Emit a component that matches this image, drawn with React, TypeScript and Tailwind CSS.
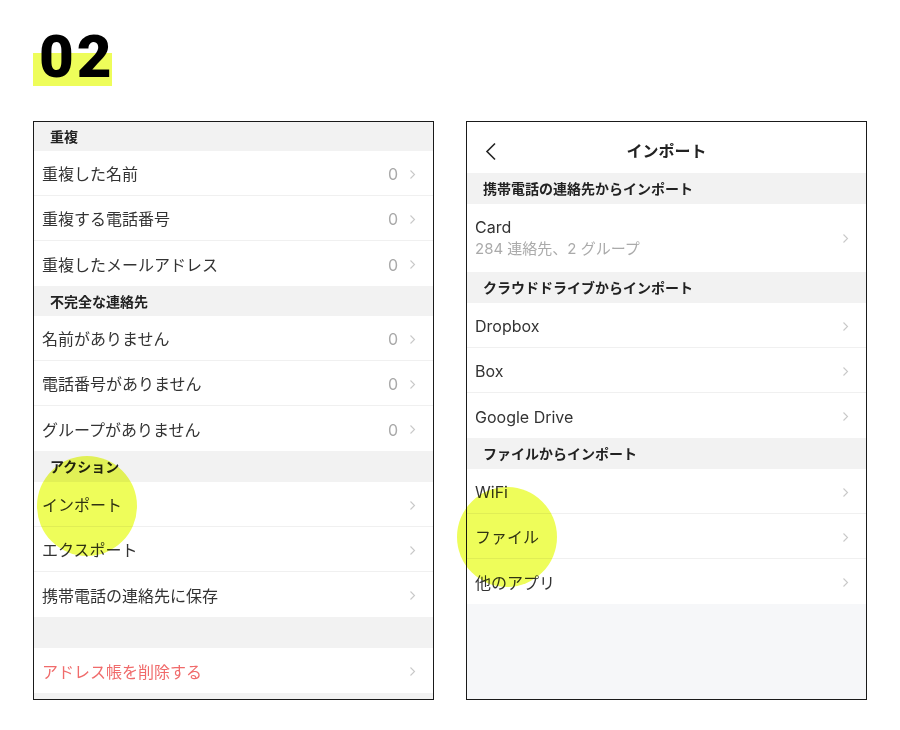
import React from "react";

const Chevron = () => (
  <svg width="7" height="11" viewBox="0 0 7 11" className="shrink-0">
    <polyline points="1.5,1.5 5.5,5.5 1.5,9.5" fill="none" stroke="#c9c9c9" strokeWidth="1.1" />
  </svg>
);

const Header = ({ children, h = "h-[30px]" }: { children: React.ReactNode; h?: string }) => (
  <div className={`${h} bg-[#f2f2f2] flex items-center pl-[16px] text-[14px] font-bold text-[#222]`}>
    {children}
  </div>
);

const Row = ({
  label,
  value,
  red,
  last,
}: {
  label: string;
  value?: string;
  red?: boolean;
  last?: boolean;
}) => (
  <div
    className={`h-[45px] bg-white flex items-center pl-[8px] pr-[17px] pt-[2px] ${last ? "" : "border-b border-[#f0f0f0]"}`}
  >
    <span className={`flex-1 text-[16px] ${red ? "text-[#f06b6b]" : "text-[#333]"}`}>{label}</span>
    {value !== undefined && <span className="text-[16px] text-[#aaa] mr-[11px]">{value}</span>}
    <Chevron />
  </div>
);

export default function App() {
  return (
    <div
      className="relative w-[900px] h-[730px] bg-white overflow-hidden"
      style={{ fontFamily: 'Inter, "Noto Sans CJK JP", sans-serif' }}
    >
      <div className="ml-[33px] mt-[28px] h-[58px] w-[79px] bg-[linear-gradient(transparent_25px,#eefd5a_25px)]">
        <span
          className="block pl-[6px] text-[60px] leading-[58px] font-black tracking-[3px] text-black"
          style={{ fontFamily: "Roboto, sans-serif" }}
        >
          02
        </span>
      </div>

      <div className="mt-[35px] flex gap-[32px] px-[33px]">
        {/* Left panel */}
        <div className="w-[401px] h-[579px] border border-[#1a1a1a] bg-[#f2f2f2] flex flex-col">
          <Header h="h-[29px]">重複</Header>
          <Row label="重複した名前" value="0" />
          <Row label="重複する電話番号" value="0" />
          <Row label="重複したメールアドレス" value="0" last />
          <Header>不完全な連絡先</Header>
          <Row label="名前がありません" value="0" />
          <Row label="電話番号がありません" value="0" />
          <Row label="グループがありません" value="0" last />
          <Header h="h-[31px]">アクション</Header>
          <Row label="インポート" />
          <Row label="エクスポート" />
          <Row label="携帯電話の連絡先に保存" last />
          <div className="h-[31px] bg-[#f2f2f2]" />
          <Row label="アドレス帳を削除する" red last />
        </div>

        {/* Right panel */}
        <div className="w-[401px] h-[579px] border border-[#1a1a1a] bg-[#f6f7f9] flex flex-col">
          <div className="h-[51px] bg-white relative flex items-center justify-center pt-[7px]">
            <svg width="12" height="20" viewBox="0 0 12 20" className="absolute left-[18px] top-[20px]">
              <polyline points="10,1.5 2,9.5 10,17.5" fill="none" stroke="#222" strokeWidth="1.6" />
            </svg>
            <span className="text-[16px] font-bold text-[#222]">インポート</span>
          </div>
          <Header h="h-[31px]">携帯電話の連絡先からインポート</Header>
          <div className="h-[68px] bg-white flex items-center pl-[8px] pr-[17px]">
            <div className="flex-1 flex flex-col">
              <span className="text-[16px] text-[#333] leading-[22px]">Card</span>
              <span className="text-[15px] text-[#aaa] leading-[22px]">284 連絡先、2 グループ</span>
            </div>
            <Chevron />
          </div>
          <Header h="h-[31px]">クラウドドライブからインポート</Header>
          <Row label="Dropbox" />
          <Row label="Box" />
          <Row label="Google Drive" last />
          <Header h="h-[31px]">ファイルからインポート</Header>
          <Row label="WiFi" />
          <Row label="ファイル" />
          <Row label="他のアプリ" last />
        </div>
      </div>

      {/* highlight circles */}
      <div className="absolute left-[37px] top-[456px] w-[100px] h-[100px] rounded-full bg-[#eefd5a] mix-blend-multiply pointer-events-none" />
      <div className="absolute left-[457px] top-[487px] w-[100px] h-[100px] rounded-full bg-[#eefd5a] mix-blend-multiply pointer-events-none" />
    </div>
  );
}
